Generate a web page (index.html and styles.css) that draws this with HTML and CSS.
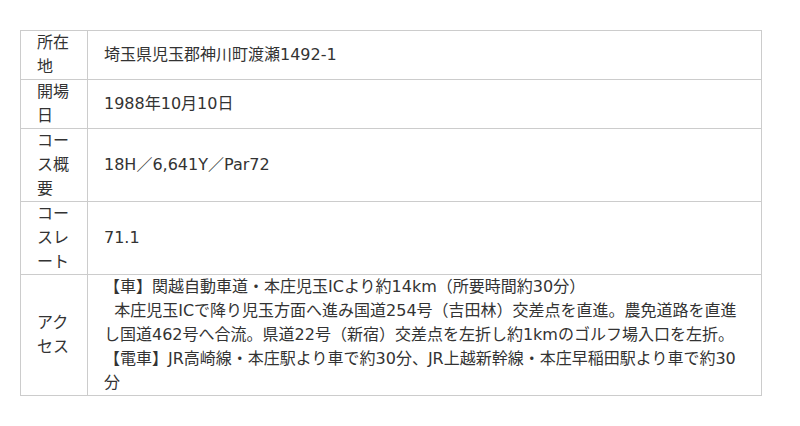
FILE: index.html
```html
<!DOCTYPE html>
<html lang="ja">
<head>
  <meta charset="UTF-8" />
  <meta name="viewport" content="width=device-width, initial-scale=1.0"/>
  <title>コース情報</title>
  <link rel="stylesheet" href="styles.css">
</head>
<body>
  <table class="info">
    <tr>
      <th>所在地</th>
      <td>埼玉県児玉郡神川町渡瀬1492-1</td>
    </tr>
    <tr>
      <th>開場日</th>
      <td>1988年10月10日</td>
    </tr>
    <tr>
      <th>コース概要</th>
      <td>18H／6,641Y／Par72</td>
    </tr>
    <tr>
      <th>コースレート</th>
      <td>71.1</td>
    </tr>
    <tr>
      <th>アクセス</th>
      <td>【車】関越自動車道・本庄児玉ICより約14km（所要時間約30分）<br>&nbsp;&nbsp;本庄児玉ICで降り児玉方面へ進み国道254号（吉田林）交差点を直進。農免道路を直進し国道462号へ合流。県道22号（新宿）交差点を左折し約1kmのゴルフ場入口を左折。<br>【電車】JR高崎線・本庄駅より車で約30分、JR上越新幹線・本庄早稲田駅より車で約30分</td>
    </tr>
  </table>
</body>
</html>
```

FILE: styles.css
```css
body {
  margin: 0;
  padding: 30px 20px;
  font-family: "DejaVu Sans", "Noto Sans CJK JP", sans-serif;
  font-size: 16px;
  line-height: 24px;
  color: #333;
  background: #fff;
}
.info {
  width: 742px;
  border-collapse: collapse;
}
.info th,
.info td {
  border: 1px solid #ccc;
  padding: 0 16px;
  vertical-align: middle;
  text-align: left;
  font-weight: normal;
}
.info th {
  width: 34px;
}
```
